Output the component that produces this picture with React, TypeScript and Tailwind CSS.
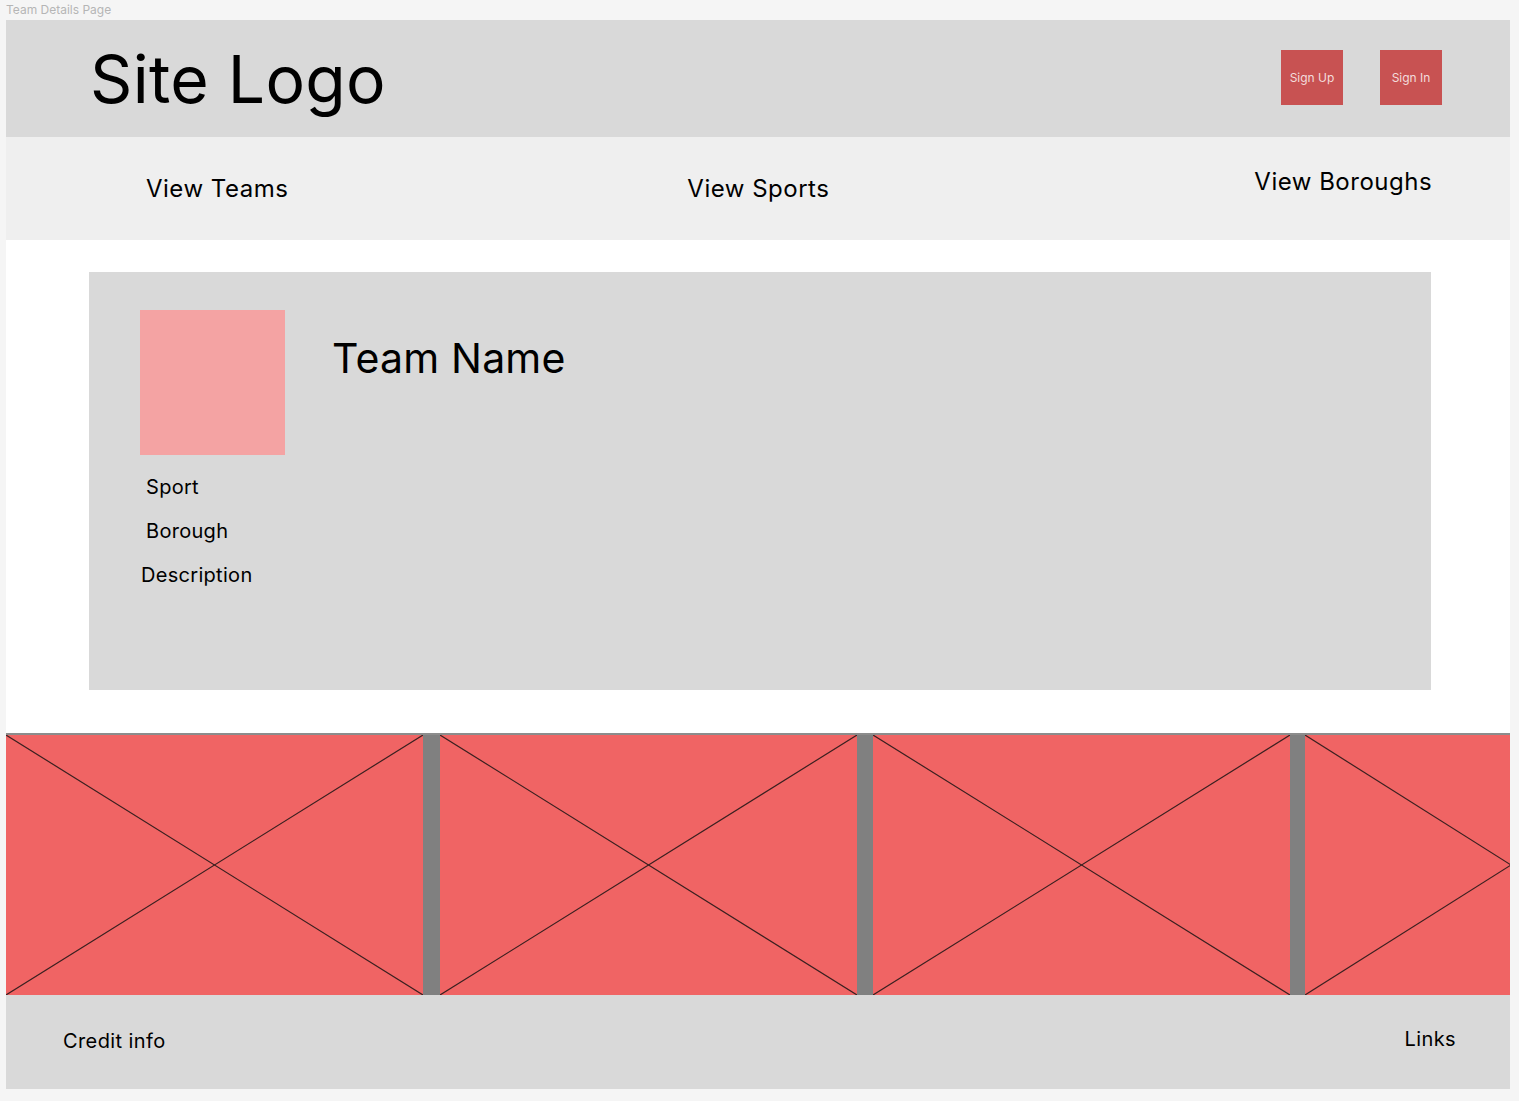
import React from "react";

function XPanel({ width }: { width: number }) {
  return (
    <div className="relative h-full shrink-0 bg-[#f06464]" style={{ width }}>
      <svg className="absolute inset-0 h-full w-full" viewBox="0 0 100 100" preserveAspectRatio="none">
        <line x1="0" y1="0" x2="100" y2="100" stroke="#3a2020" strokeWidth="1.2" vectorEffect="non-scaling-stroke" />
        <line x1="100" y1="0" x2="0" y2="100" stroke="#3a2020" strokeWidth="1.2" vectorEffect="non-scaling-stroke" />
      </svg>
    </div>
  );
}

export default function App() {
  return (
    <div className="min-h-[1101px] w-full bg-[#f5f5f5] font-['Inter',sans-serif] text-black">
      <div className="flex h-[20px] items-center pl-[6px] text-[12px] leading-none text-[#b5b5b5]">Team Details Page</div>
      <div className="ml-[6px] flex w-[1504px] flex-col">
        {/* Header */}
        <div className="flex h-[117px] items-center justify-between bg-[#d9d9d9] pl-[84px] pr-[68px]">
          <div className="mt-[1px] text-[66px] leading-none tracking-[0.3px]">Site Logo</div>
          <div className="mt-[-2px] flex gap-[37px]">
            <div className="flex h-[55px] w-[62px] items-center justify-center bg-[#c85252] text-[12px] text-[#f3dcdc]">Sign Up</div>
            <div className="flex h-[55px] w-[62px] items-center justify-center bg-[#c85252] text-[12px] text-[#f3dcdc]">Sign In</div>
          </div>
        </div>
        {/* Nav */}
        <div className="flex h-[103px] items-start bg-[#efefef] text-[24px] leading-[32px] tracking-[0.5px]">
          <div className="ml-[140px] mt-[36px]">View Teams</div>
          <div className="ml-[399px] mt-[36px]">View Sports</div>
          <div className="ml-[425px] mt-[29px]">View Boroughs</div>
        </div>
        {/* Main */}
        <div className="flex h-[493px] flex-col bg-white pl-[83px] pr-[79px] pt-[32px]">
          <div className="flex h-[418px] bg-[#d9d9d9] pl-[51px] pt-[38px]">
            <div className="flex flex-col">
              <div className="h-[145px] w-[145px] bg-[#f4a3a3]" />
              <div className="mt-[18px] flex flex-col gap-[16px] text-[20px] leading-[28px] tracking-[0.3px]">
                <div className="pl-[6px]">Sport</div>
                <div className="pl-[6px]">Borough</div>
                <div className="pl-[1px]">Description</div>
              </div>
            </div>
            <div className="ml-[47px] mt-[24px] text-[41px] leading-[48px] tracking-[0.2px]">Team Name</div>
          </div>
        </div>
        {/* Strip */}
        <div className="flex h-[262px] overflow-hidden border-t-2 border-[#8c8c8c]">
          <XPanel width={417} />
          <div className="h-full w-[17px] shrink-0 bg-[#808080]" />
          <XPanel width={417} />
          <div className="h-full w-[16px] shrink-0 bg-[#808080]" />
          <XPanel width={417} />
          <div className="h-full w-[15px] shrink-0 bg-[#808080]" />
          <XPanel width={412} />
        </div>
        {/* Footer */}
        <div className="flex h-[94px] items-start justify-between bg-[#d9d9d9] pl-[57px] pr-[54px] text-[20px] leading-[28px] tracking-[0.4px]">
          <div className="mt-[32px]">Credit info</div>
          <div className="mt-[30px]">Links</div>
        </div>
      </div>
    </div>
  );
}
